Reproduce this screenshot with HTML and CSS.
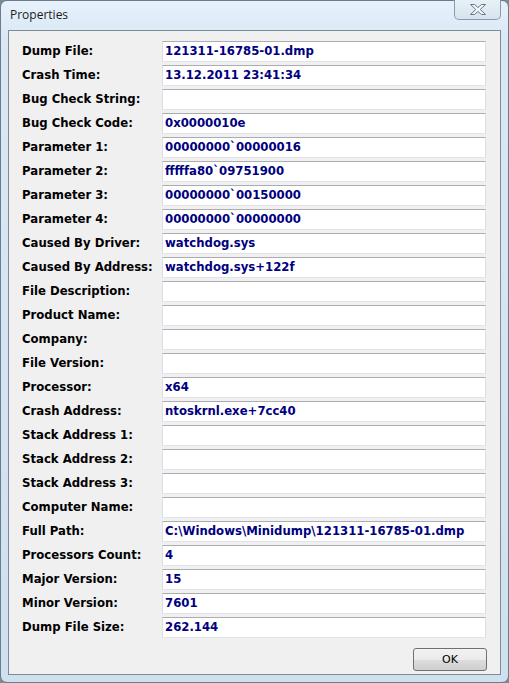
FILE: index.html
```html
<!DOCTYPE html>
<html lang="en">
<head>
  <meta charset="UTF-8">
  <title>Properties</title>
  <link rel="stylesheet" href="styles.css">
</head>
<body>
  <div class="window">
    <div class="titlebar">
      <span class="title">Properties</span>
      <button class="close" aria-label="Close">
        <svg width="18" height="13" viewBox="0 0 18 13">
          <path d="M1.5 1.5h4l3.5 3 3.5-3h4l-5.3 5 5.3 5h-4l-3.5-3-3.5 3h-4l5.3-5z" fill="#f4f7fa" stroke="#6b7683" stroke-width="1" stroke-linejoin="round"/>
        </svg>
      </button>
    </div>
    <div class="client">
      <div class="props">
        <label>Dump File:</label><div class="field">121311-16785-01.dmp</div>
        <label>Crash Time:</label><div class="field">13.12.2011 23:41:34</div>
        <label>Bug Check String:</label><div class="field"></div>
        <label>Bug Check Code:</label><div class="field">0x0000010e</div>
        <label>Parameter 1:</label><div class="field">00000000`00000016</div>
        <label>Parameter 2:</label><div class="field">fffffa80`09751900</div>
        <label>Parameter 3:</label><div class="field">00000000`00150000</div>
        <label>Parameter 4:</label><div class="field">00000000`00000000</div>
        <label>Caused By Driver:</label><div class="field">watchdog.sys</div>
        <label>Caused By Address:</label><div class="field">watchdog.sys+122f</div>
        <label>File Description:</label><div class="field"></div>
        <label>Product Name:</label><div class="field"></div>
        <label>Company:</label><div class="field"></div>
        <label>File Version:</label><div class="field"></div>
        <label>Processor:</label><div class="field">x64</div>
        <label>Crash Address:</label><div class="field">ntoskrnl.exe+7cc40</div>
        <label>Stack Address 1:</label><div class="field"></div>
        <label>Stack Address 2:</label><div class="field"></div>
        <label>Stack Address 3:</label><div class="field"></div>
        <label>Computer Name:</label><div class="field"></div>
        <label>Full Path:</label><div class="field">C:\Windows\Minidump\121311-16785-01.dmp</div>
        <label>Processors Count:</label><div class="field">4</div>
        <label>Major Version:</label><div class="field">15</div>
        <label>Minor Version:</label><div class="field">7601</div>
        <label>Dump File Size:</label><div class="field">262.144</div>
      </div>
      <div class="actions">
        <button class="ok">OK</button>
      </div>
    </div>
  </div>
</body>
</html>
```

FILE: styles.css
```css
body {
  margin: 0;
  background: #7d8a96;
  font-family: "DejaVu Sans", Verdana, sans-serif;
}

.window {
  width: 509px;
  height: 683px;
  box-sizing: border-box;
  background: linear-gradient(to bottom, #e6f1fb 0, #d9e8f5 40px, #cfe0ee 100%);
  border: 1px solid #6e7c8a;
  border-radius: 7px;
  padding: 0 7px 7px 7px;
  display: flex;
  flex-direction: column;
}

.titlebar {
  height: 29px;
  display: flex;
  align-items: flex-start;
  justify-content: space-between;
}

.title {
  font-family: "Open Sans", "Noto Sans", sans-serif;
  font-size: 12px;
  color: #1b1b1b;
  margin: 5px 0 0 2px;
}

.close {
  width: 47px;
  height: 20px;
  margin-top: -1px;
  margin-right: 0;
  padding: 0;
  border: 1px solid #8d99a6;
  border-top: none;
  border-radius: 0 0 5px 5px;
  background: linear-gradient(to bottom, #e9f1f8, #d6e3ee);
  display: flex;
  align-items: center;
  justify-content: center;
}

.client {
  flex: 1;
  background: #f0f0f0;
  border: 1px solid #7f8a96;
  padding: 10px 13px 0 13px;
  display: flex;
  flex-direction: column;
}

.props {
  display: grid;
  grid-template-columns: 140px 324px;
  grid-auto-rows: 21px;
  row-gap: 3px;
}

.props label {
  font-weight: bold;
  font-size: 11.7px;
  color: #000;
  line-height: 21px;
}

.field {
  box-sizing: border-box;
  background: #fff;
  border: 1px solid #e2e3ea;
  border-top-color: #abadb3;
  border-left-color: #dbdfe6;
  border-right-color: #dbdfe6;
  padding: 0 2px;
  font-weight: bold;
  font-size: 11.7px;
  color: #00007f;
  line-height: 19px;
  white-space: nowrap;
}

.actions {
  display: flex;
  justify-content: flex-end;
  margin-top: 10px;
}

.ok {
  width: 74px;
  height: 23px;
  border: 1px solid #707070;
  border-radius: 3px;
  background: linear-gradient(to bottom, #f2f2f2 0, #ebebeb 50%, #dddddd 51%, #cfcfcf 100%);
  font-family: "DejaVu Sans", sans-serif;
  font-size: 11px;
  color: #000;
  padding: 0;
}
```
